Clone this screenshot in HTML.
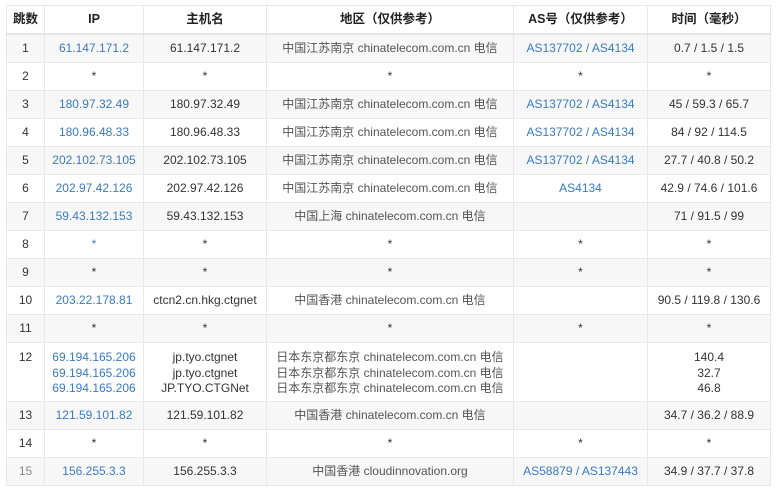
<!DOCTYPE html>
<html><head><meta charset="utf-8"><style>
body{margin:0;background:#fff;width:780px;height:493px;overflow:hidden;font-family:"Liberation Sans","Noto Sans CJK SC",sans-serif;}
table{position:absolute;left:6px;top:5px;border-collapse:collapse;font-size:12px;color:#333;table-layout:fixed;}
td,th{border:1px solid #e8e8e8;text-align:center;padding:0;height:27px;line-height:15px;}
th{font-weight:bold;color:#222;height:27px;border-bottom:2px solid #e4e4e4;font-size:12.5px}
tr.o td{background:#f7f7f7}
.b{color:#3a7bc0}
.r{color:#555}
tr.big td{height:59px;vertical-align:top;padding-top:7px;line-height:15.5px;box-sizing:border-box}
</style></head><body>
<table>
<colgroup><col style="width:38px"><col style="width:99px"><col style="width:123px"><col style="width:247px"><col style="width:134px"><col style="width:123px"></colgroup>
<tr><th>跳数</th><th>IP</th><th>主机名</th><th>地区（仅供参考）</th><th>AS号（仅供参考）</th><th>时间（毫秒）</th></tr>
<tr class="o"><td>1</td><td class="b">61.147.171.2</td><td>61.147.171.2</td><td class="r">中国江苏南京 chinatelecom.com.cn 电信</td><td class="b">AS137702 / AS4134</td><td>0.7 / 1.5 / 1.5</td></tr>
<tr><td>2</td><td>*</td><td>*</td><td>*</td><td>*</td><td>*</td></tr>
<tr class="o"><td>3</td><td class="b">180.97.32.49</td><td>180.97.32.49</td><td class="r">中国江苏南京 chinatelecom.com.cn 电信</td><td class="b">AS137702 / AS4134</td><td>45 / 59.3 / 65.7</td></tr>
<tr><td>4</td><td class="b">180.96.48.33</td><td>180.96.48.33</td><td class="r">中国江苏南京 chinatelecom.com.cn 电信</td><td class="b">AS137702 / AS4134</td><td>84 / 92 / 114.5</td></tr>
<tr class="o"><td>5</td><td class="b">202.102.73.105</td><td>202.102.73.105</td><td class="r">中国江苏南京 chinatelecom.com.cn 电信</td><td class="b">AS137702 / AS4134</td><td>27.7 / 40.8 / 50.2</td></tr>
<tr><td>6</td><td class="b">202.97.42.126</td><td>202.97.42.126</td><td class="r">中国江苏南京 chinatelecom.com.cn 电信</td><td class="b">AS4134</td><td>42.9 / 74.6 / 101.6</td></tr>
<tr class="o"><td>7</td><td class="b">59.43.132.153</td><td>59.43.132.153</td><td class="r">中国上海 chinatelecom.com.cn 电信</td><td></td><td>71 / 91.5 / 99</td></tr>
<tr><td>8</td><td class="b">*</td><td>*</td><td>*</td><td>*</td><td>*</td></tr>
<tr class="o"><td>9</td><td>*</td><td>*</td><td>*</td><td>*</td><td>*</td></tr>
<tr><td>10</td><td class="b">203.22.178.81</td><td>ctcn2.cn.hkg.ctgnet</td><td class="r">中国香港 chinatelecom.com.cn 电信</td><td></td><td>90.5 / 119.8 / 130.6</td></tr>
<tr class="o"><td>11</td><td>*</td><td>*</td><td>*</td><td>*</td><td>*</td></tr>
<tr class="big"><td>12</td><td class="b">69.194.165.206<br>69.194.165.206<br>69.194.165.206</td><td>jp.tyo.ctgnet<br>jp.tyo.ctgnet<br>JP.TYO.CTGNet</td><td class="r">日本东京都东京 chinatelecom.com.cn 电信<br>日本东京都东京 chinatelecom.com.cn 电信<br>日本东京都东京 chinatelecom.com.cn 电信</td><td></td><td>140.4<br>32.7<br>46.8</td></tr>
<tr class="o"><td>13</td><td class="b">121.59.101.82</td><td>121.59.101.82</td><td class="r">中国香港 chinatelecom.com.cn 电信</td><td></td><td>34.7 / 36.2 / 88.9</td></tr>
<tr><td>14</td><td>*</td><td>*</td><td>*</td><td>*</td><td>*</td></tr>
<tr class="o"><td style="color:#888">15</td><td class="b">156.255.3.3</td><td>156.255.3.3</td><td class="r">中国香港 cloudinnovation.org</td><td class="b">AS58879 / AS137443</td><td>34.9 / 37.7 / 37.8</td></tr>
</table>
</body></html>
